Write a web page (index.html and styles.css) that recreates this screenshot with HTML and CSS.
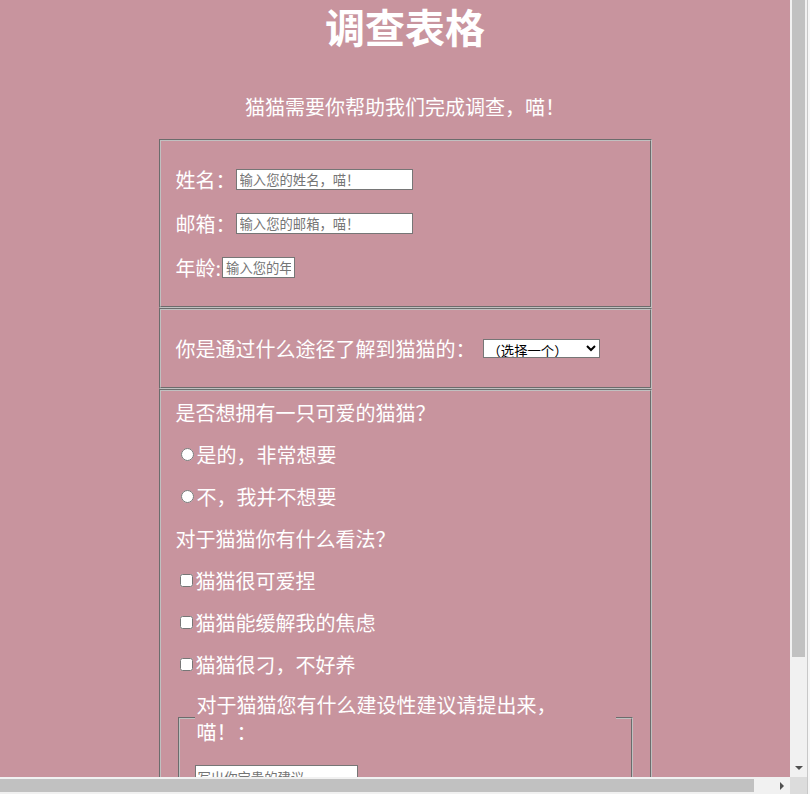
FILE: index.html
```html
<!DOCTYPE html>
<html lang="zh-CN">
<head>
<meta charset="utf-8">
<title>调查表格</title>
<link rel="stylesheet" href="styles.css">
</head>
<body>
<h1 class="title">调查表格</h1>
<p class="intro">猫猫需要你帮助我们完成调查，喵！</p>
<form class="survey">
  <fieldset class="group">
    <p class="row"><label for="name">姓名：</label><input id="name" class="field" type="text" placeholder="输入您的姓名，喵！"></p>
    <p class="row"><label for="email">邮箱：</label><input id="email" class="field" type="email" placeholder="输入您的邮箱，喵！"></p>
    <p class="row"><label for="age">年龄:</label><input id="age" class="field field-age" type="text" placeholder="输入您的年龄，喵！"></p>
  </fieldset>
  <fieldset class="group">
    <p class="row"><label for="source">你是通过什么途径了解到猫猫的：</label><select id="source" class="choice"><option>（选择一个）</option><option>朋友推荐</option><option>网络</option></select></p>
  </fieldset>
  <fieldset class="group">
    <div class="item item-first">是否想拥有一只可爱的猫猫？</div>
    <label class="item"><input class="radio" type="radio" name="want">是的，非常想要</label>
    <label class="item"><input class="radio" type="radio" name="want">不，我并不想要</label>
    <div class="item">对于猫猫你有什么看法？</div>
    <label class="item"><input class="check" type="checkbox">猫猫很可爱捏</label>
    <label class="item"><input class="check" type="checkbox">猫猫能缓解我的焦虑</label>
    <label class="item"><input class="check" type="checkbox">猫猫很刁，不好养</label>
    <fieldset class="suggest">
      <legend class="suggest-title">对于猫猫您有什么建设性建议请提出来，喵！：</legend>
      <textarea class="note" placeholder="写出你宝贵的建议"></textarea>
    </fieldset>
    <p class="actions"><button type="submit" class="submit">提交</button></p>
  </fieldset>
</form>

<div class="scrollbar-v" aria-hidden="true"><div class="thumb-v"></div><div class="arrow-down"></div></div>
<div class="scrollbar-h" aria-hidden="true"><div class="thumb-h"></div><div class="arrow-right"></div></div>
<div class="scroll-corner" aria-hidden="true"></div>
<div class="window-edge" aria-hidden="true"></div>
</body>
</html>
```
FILE: styles.css
```css
body {
  margin: 4px 8px 8px;
  width: calc(100% - 16px);
  background: #c8949e;
  color: #fff;
  font-family: "Noto Sans CJK SC", "Microsoft YaHei", sans-serif;
  font-size: 20px;
}

.title {
  margin: 0;
  font-size: 40px;
  line-height: 44px;
  font-weight: 700;
  text-align: center;
}

.intro {
  margin: 47px 0 20px;
  line-height: 24px;
  text-align: center;
}

.survey {
  width: 497px;
  margin: 0 auto;
}

.group {
  margin: 0 2px;
  padding: 6px 15px 7px;
  border: 2px groove #c0c0c0;
  min-width: 0;
}

.row {
  display: flex;
  align-items: center;
  height: 24px;
  margin: 20px 0;
}

.field {
  box-sizing: border-box;
  width: 177px;
  height: 21px;
  padding: 1px 3px;
  border: 1px solid #767676;
  background: #fff;
  color: #000;
  font: 13.33px "Noto Sans CJK SC", sans-serif;
}

.field::placeholder {
  color: #757575;
}

.field-age {
  width: 73px;
  margin-left: 1px;
}

.choice {
  box-sizing: border-box;
  width: 117px;
  height: 19px;
  margin-left: 7px;
  border: 1px solid #767676;
  background: #fff;
  color: #000;
  font: 13.33px "Noto Sans CJK SC", sans-serif;
}

.item {
  display: flex;
  align-items: center;
  height: 24px;
  margin-top: 18px;
}

.item-first {
  margin-top: 3px;
}

.radio {
  margin: 1px 3px 0 5px;
}

.check {
  margin: 1px 3px 0 4px;
}

.suggest {
  margin: 15px 2px 0;
  padding: 7px 15px 12px;
  border: 2px groove #c0c0c0;
  min-width: 0;
}

.suggest-title {
  padding: 0 2px;
  line-height: 27px;
}

.note {
  display: block;
  box-sizing: border-box;
  width: 163px;
  height: 48px;
  margin-top: 13px;
  border: 1px solid #767676;
  font: 13.33px "Noto Sans CJK SC", sans-serif;
}

.actions {
  margin: 20px 0 10px;
}

.submit {
  font: 16px "Noto Sans CJK SC", sans-serif;
  padding: 2px 12px;
}

/* window chrome drawn over the page: scrollbars */
.scrollbar-v {
  position: fixed;
  top: 0;
  right: 3px;
  width: 17px;
  height: 777px;
  background: #f1f1f1;
  display: flex;
  flex-direction: column;
  align-items: center;
}

.thumb-v {
  width: 13px;
  height: 657px;
  background: #c1c1c1;
}

.arrow-down {
  width: 0;
  height: 0;
  margin: auto 0 7px;
  border-left: 4px solid transparent;
  border-right: 4px solid transparent;
  border-top: 4px solid #505050;
}

.scrollbar-h {
  position: fixed;
  left: 0;
  bottom: 0;
  width: 790px;
  height: 17px;
  background: #f1f1f1;
  display: flex;
  align-items: center;
}

.thumb-h {
  width: 754px;
  height: 13px;
  background: #c1c1c1;
}

.arrow-right {
  width: 0;
  height: 0;
  margin: 0 6px 0 auto;
  border-top: 4px solid transparent;
  border-bottom: 4px solid transparent;
  border-left: 4px solid #505050;
}

.scroll-corner {
  position: fixed;
  right: 3px;
  bottom: 0;
  width: 17px;
  height: 17px;
  background: #dcdcdc;
}

.window-edge {
  position: fixed;
  top: 0;
  right: 0;
  width: 3px;
  height: 100%;
  box-sizing: border-box;
  border-left: 1px solid #c8c8c8;
  background: #f7f7f7;
}
```
